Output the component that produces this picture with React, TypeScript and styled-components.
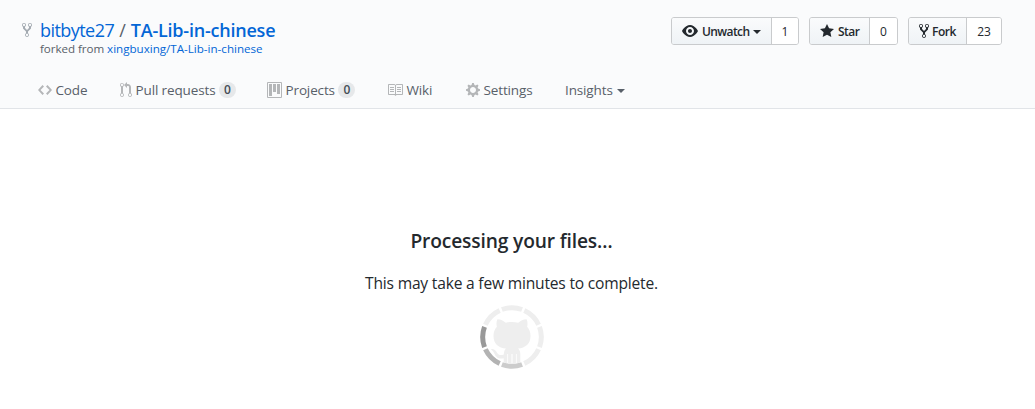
import React from 'react';
import styled, { createGlobalStyle } from 'styled-components';

const GlobalStyle = createGlobalStyle`
  * { box-sizing: border-box; }
  body {
    margin: 0;
    background: #fff;
    color: #24292e;
    font-family: 'Open Sans', 'Noto Sans', sans-serif;
  }
`;

const paths = {
  fork: 'M8 1a1.993 1.993 0 0 0-1 3.72V6L5 8 3 6V4.72A1.993 1.993 0 0 0 2 1a1.993 1.993 0 0 0-1 3.72V6.5l3 3v1.78A1.993 1.993 0 0 0 5 15a1.993 1.993 0 0 0 1-3.72V9.5l3-3V4.72A1.993 1.993 0 0 0 8 1zM2 4.2C1.34 4.2.8 3.65.8 3c0-.65.55-1.2 1.2-1.2.65 0 1.2.55 1.2 1.2 0 .65-.55 1.2-1.2 1.2zm3 10c-.66 0-1.2-.55-1.2-1.2 0-.65.55-1.2 1.2-1.2.65 0 1.2.55 1.2 1.2 0 .65-.55 1.2-1.2 1.2zm3-10c-.66 0-1.2-.55-1.2-1.2 0-.65.55-1.2 1.2-1.2.65 0 1.2.55 1.2 1.2 0 .65-.55 1.2-1.2 1.2z',
  eye: 'M8.06 2C3 2 0 8 0 8s3 6 8.06 6C13 14 16 8 16 8s-3-6-7.94-6zM8 12c-2.2 0-4-1.78-4-4 0-2.2 1.8-4 4-4 2.22 0 4 1.8 4 4 0 2.22-1.78 4-4 4zm2-4c0 1.11-.89 2-2 2-1.11 0-2-.89-2-2 0-1.11.89-2 2-2 1.11 0 2 .89 2 2z',
  star: 'M14 6l-4.9-.64L7 1 4.9 5.36 0 6l3.6 3.26L2.67 14 7 11.67 11.33 14l-.93-4.74z',
  code: 'M9.5 3L8 4.5 11.5 8 8 11.5 9.5 13 14 8 9.5 3zm-5 0L0 8l4.5 5L6 11.5 2.5 8 6 4.5 4.5 3z',
  pull: 'M11 11.28V5c-.03-.78-.34-1.47-.94-2.06C9.46 2.35 8.78 2.03 8 2H7V0L4 3l3 3V4h1c.27.02.48.11.69.31.21.2.3.42.31.69v6.28A1.993 1.993 0 0 0 10 15a1.993 1.993 0 0 0 1-3.72zm-1 2.92c-.66 0-1.2-.55-1.2-1.2 0-.65.55-1.2 1.2-1.2.65 0 1.2.55 1.2 1.2 0 .65-.55 1.2-1.2 1.2zM4 3c0-1.11-.89-2-2-2a1.993 1.993 0 0 0-1 3.72v6.56A1.993 1.993 0 0 0 2 15a1.993 1.993 0 0 0 1-3.72V4.72c.59-.34 1-.98 1-1.72zm-.8 10c0 .66-.55 1.2-1.2 1.2-.65 0-1.2-.55-1.2-1.2 0-.65.55-1.2 1.2-1.2.65 0 1.2.55 1.2 1.2zM2 4.2C1.34 4.2.8 3.65.8 3c0-.65.55-1.2 1.2-1.2.65 0 1.2.55 1.2 1.2 0 .65-.55 1.2-1.2 1.2z',
  project: 'M10 12h3V2h-3v10zm-4-2h3V2H6v8zm-4 4h3V2H2v12zm-1 1h13V1H1v14zM14 0H1a1 1 0 0 0-1 1v14a1 1 0 0 0 1 1h13a1 1 0 0 0 1-1V1a1 1 0 0 0-1-1z',
  book: 'M3 5h4v1H3V5zm0 3h4V7H3v1zm0 2h4V9H3v1zm11-5h-4v1h4V5zm0 2h-4v1h4V7zm0 2h-4v1h4V9zm2-6v9c0 .55-.45 1-1 1H9.5l-1 1-1-1H2c-.55 0-1-.45-1-1V3c0-.55.45-1 1-1h5.5l1 1 1-1H15c.55 0 1 .45 1 1zm-8 .5L7.5 3H2v9h6V3.5zm7-.5H9.5l-.5.5V12h6V3z',
  gear: 'M14 8.77v-1.6l-1.94-.64-.45-1.09.88-1.84-1.13-1.13-1.81.91-1.09-.45-.69-1.92h-1.6l-.63 1.94-1.11.45-1.84-.88-1.13 1.13.91 1.81-.45 1.09L0 7.23v1.59l1.94.64.45 1.09-.88 1.84 1.13 1.13 1.81-.91 1.09.45.69 1.92h1.59l.63-1.94 1.11-.45 1.84.88 1.13-1.13-.92-1.81.47-1.09L14 8.75v.02zM7 11c-1.66 0-3-1.34-3-3s1.34-3 3-3 3 1.34 3 3-1.34 3-3 3z',
};

type IconName = keyof typeof paths;

const IconSvg = styled.svg`
  display: block;
  flex: none;
  fill: currentColor;
`;

const Icon = ({ name, width }: { name: IconName; width: number }) => (
  <IconSvg width={width} height={16} viewBox={`0 0 ${width} 16`}>
    <path fillRule="evenodd" d={paths[name]} />
  </IconSvg>
);

const Header = styled.header`
  height: 109px;
  background: #fafbfc;
  border-bottom: 1px solid #e1e4e8;
  display: flex;
  flex-direction: column;
  justify-content: space-between;
`;

const TopRow = styled.div`
  display: flex;
  justify-content: space-between;
  align-items: flex-start;
  padding: 17px 33px 0 22px;
`;

const Repo = styled.div`
  display: flex;
  gap: 8px;
`;

const RepoIcon = styled.span`
  color: #a3aab1;
  padding-top: 5px;
`;

const Title = styled.h1`
  margin: 0;
  font-size: 18px;
  line-height: 27px;
  font-weight: 400;
  color: #586069;
  white-space: nowrap;
`;

const Link = styled.a<{ $bold?: boolean; $spacing?: number }>`
  color: #0366d6;
  font-weight: ${(p) => (p.$bold ? 600 : 400)};
  letter-spacing: ${(p) => p.$spacing ?? 0}px;
`;

const Slash = styled.span`
  margin: 0 5px 0 5px;
`;

const ForkNote = styled.div`
  font-size: 11.6px;
  line-height: 12px;
  margin-top: -1px;
  color: #586069;
  white-space: nowrap;
  letter-spacing: -0.05px;
`;

const Actions = styled.div`
  display: flex;
  gap: 10px;
`;

const ButtonGroup = styled.div<{ $width: number }>`
  display: flex;
  width: ${(p) => p.$width}px;
  height: 28px;
  border: 1px solid #c9cbcd;
  border-radius: 3px;
  overflow: hidden;
  font-size: 12px;
  line-height: 27px;
  font-weight: 600;
`;

const ActionButton = styled.button<{ $gap: number; $spacing: number }>`
  flex: 1;
  display: flex;
  align-items: center;
  gap: ${(p) => p.$gap}px;
  padding: 0 0 0 10px;
  border: 0;
  background: linear-gradient(#fafbfc, #eff3f6);
  color: #24292e;
  font: inherit;
  letter-spacing: ${(p) => p.$spacing}px;
`;

const Count = styled.span<{ $width: number }>`
  width: ${(p) => p.$width}px;
  border-left: 1px solid #c9cbcd;
  background: #fff;
  text-align: center;
  font-weight: 500;
`;

const Caret = styled.i`
  width: 0;
  height: 0;
  border: 4px solid transparent;
  border-top-color: currentColor;
  border-bottom: 0;
  margin-top: 2px;
`;

const Nav = styled.nav`
  display: flex;
  height: 36px;
  padding-left: 38px;
  color: #586069;
  font-size: 13.5px;
`;

const Tab = styled.a<{ $width: number; $gap?: number }>`
  display: flex;
  align-items: center;
  width: ${(p) => p.$width}px;
  height: 36px;
  gap: ${(p) => p.$gap ?? 3.5}px;
  letter-spacing: -0.13px;
  white-space: nowrap;

  & > svg {
    color: #b4b6b8;
  }
`;

const Counter = styled.span`
  min-width: 17px;
  height: 16px;
  border-radius: 8px;
  background: #e6e8ea;
  color: #444d56;
  font-size: 12px;
  line-height: 16px;
  font-weight: 600;
  letter-spacing: 0;
  text-align: center;
`;

const Main = styled.main`
  display: flex;
  flex-direction: column;
  align-items: center;
  padding: 118px 12px 0 0;
`;

const Heading = styled.h3`
  margin: 0;
  font-size: 19.2px;
  line-height: 28px;
  font-weight: 600;
  letter-spacing: -0.15px;
`;

const Message = styled.p`
  margin: 16px 0 0;
  font-size: 15.6px;
  line-height: 24px;
  letter-spacing: -0.2px;
`;

const Spinner = styled.svg`
  display: block;
  margin-top: 10px;
`;

const segmentColors = ['#eee', '#eee', '#eee', '#eee', '#ccc', '#b3b3b3', '#999', '#eee'];

const Loader = () => (
  <Spinner width={64} height={64} viewBox="-32 -32 64 64">
    {segmentColors.map((color, i) => (
      <path
        key={i}
        d="M-10.1 -27.5A29.3 29.3 0 0 1 10.1 -27.5"
        fill="none"
        stroke={color}
        strokeWidth={5}
        transform={`rotate(${i * 45})`}
      />
    ))}
    <path
      fill="#eee"
      d="M-14.6 -17.7C-11.5 -17.8 -8.5 -16 -6.2 -14.3C-2.3 -15.2 2.3 -15.2 6.2 -14.3C8.5 -16 11.5 -17.8 14.6 -17.7C15.9 -14.7 15.6 -11.8 15.1 -10.2C17.5 -7.6 18.5 -4.7 18.5 -1C18.5 7.1 13.5 10.7 6 11.6C7.4 13 8.3 14.7 8.3 17V26H4.7V17H3.9V27H.5V17H-.5V27H-3.9V17H-4.7V26H-8.3V21.2C-14 22.6 -16.1 20 -17.8 16.2C-18.8 14.3 -20.3 13.2 -21 12.3C-19.1 11.2 -16.6 12.8 -15.1 15.4C-13.3 18.2 -11.5 18.4 -8.2 17.4C-8.2 14.7 -7.2 12.8 -6 11.6C-13.5 10.7 -18.5 7.1 -18.5 -1C-18.5 -4.7 -17.5 -7.6 -15.1 -10.2C-15.6 -11.8 -15.9 -14.7 -14.6 -17.7Z"
    />
  </Spinner>
);

export default function App() {
  return (
    <>
      <GlobalStyle />
      <Header>
        <TopRow>
          <Repo>
            <RepoIcon>
              <Icon name="fork" width={10} />
            </RepoIcon>
            <div>
              <Title>
                <Link $spacing={-0.55}>bitbyte27</Link>
                <Slash>/</Slash>
                <Link $bold $spacing={-0.22}>TA-Lib-in-chinese</Link>
              </Title>
              <ForkNote>
                forked from <Link>xingbuxing/TA-Lib-in-chinese</Link>
              </ForkNote>
            </div>
          </Repo>
          <Actions>
            <ButtonGroup $width={128}>
              <ActionButton $gap={4} $spacing={-0.6}>
                <Icon name="eye" width={16} />
                Unwatch
                <Caret />
              </ActionButton>
              <Count $width={27}>1</Count>
            </ButtonGroup>
            <ButtonGroup $width={89}>
              <ActionButton $gap={4} $spacing={-0.5}>
                <Icon name="star" width={14} />
                Star
              </ActionButton>
              <Count $width={28}>0</Count>
            </ButtonGroup>
            <ButtonGroup $width={94}>
              <ActionButton $gap={3} $spacing={-0.5}>
                <Icon name="fork" width={10} />
                Fork
              </ActionButton>
              <Count $width={35}>23</Count>
            </ButtonGroup>
          </Actions>
        </TopRow>
        <Nav>
          <Tab $width={82}>
            <Icon name="code" width={14} />
            Code
          </Tab>
          <Tab $width={147}>
            <Icon name="pull" width={12} />
            Pull requests
            <Counter>0</Counter>
          </Tab>
          <Tab $width={120}>
            <Icon name="project" width={15} />
            Projects
            <Counter>0</Counter>
          </Tab>
          <Tab $width={79}>
            <Icon name="book" width={16} />
            Wiki
          </Tab>
          <Tab $width={99}>
            <Icon name="gear" width={14} />
            Settings
          </Tab>
          <Tab $width={62} $gap={4}>
            Insights
            <Caret />
          </Tab>
        </Nav>
      </Header>
      <Main>
        <Heading>Processing your files…</Heading>
        <Message>This may take a few minutes to complete.</Message>
        <Loader />
      </Main>
    </>
  );
}
